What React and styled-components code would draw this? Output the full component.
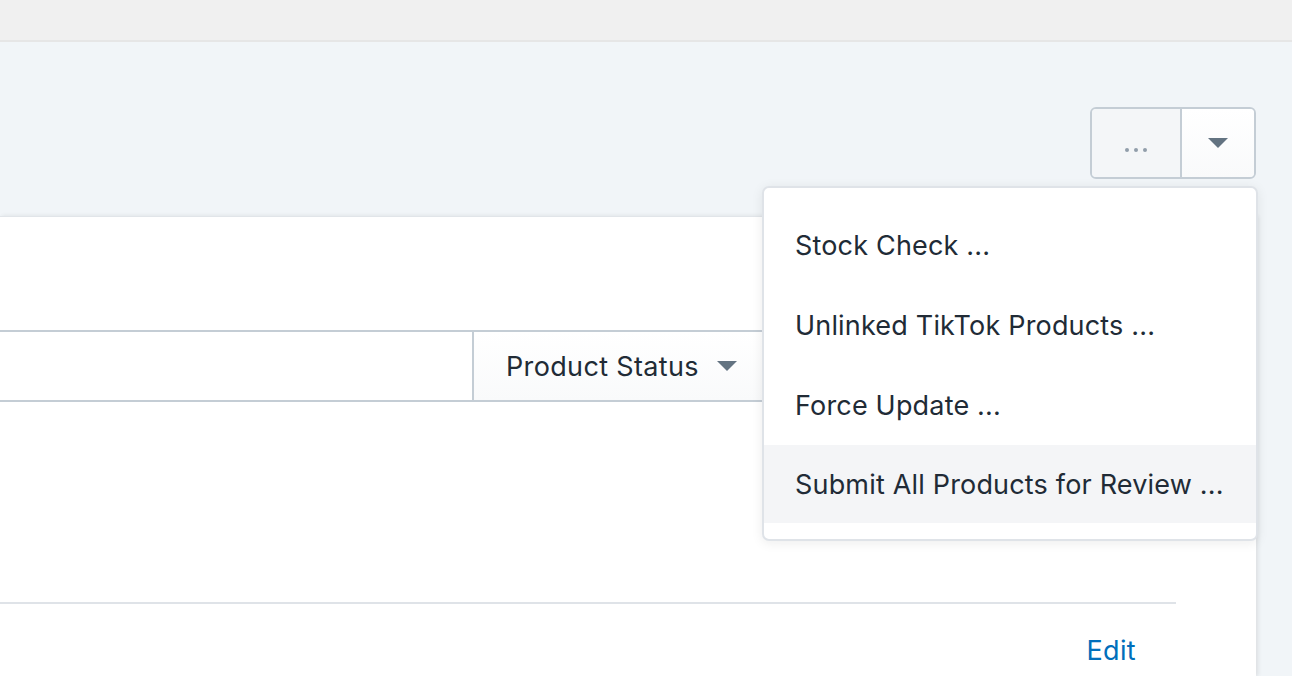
import styled, { createGlobalStyle } from 'styled-components'

const GlobalStyle = createGlobalStyle`
  html, body {
    margin: 0;
    padding: 0;
    background: #f1f5f8;
    font-family: Inter, "Noto Sans", sans-serif;
    overflow: hidden;
  }
`

const menuItems = [
  'Stock Check ...',
  'Unlinked TikTok Products ...',
  'Force Update ...',
  'Submit All Products for Review ...',
]

const App = () => {
  return (
    <Page>
      <GlobalStyle />
      <TopBar />
      <Header>
        <ActionsWrap>
          <ButtonGroup>
            <MoreButton>
              <Dots>
                <i /><i /><i />
              </Dots>
            </MoreButton>
            <CaretButton>
              <Caret $size={10} />
            </CaretButton>
          </ButtonGroup>
          <Menu>
            {menuItems.map((label, i) => (
              <MenuItem key={label} $active={i === menuItems.length - 1}>
                {label}
              </MenuItem>
            ))}
          </Menu>
        </ActionsWrap>
      </Header>
      <Card>
        <FilterRow>
          <SearchField />
          <FilterButton>
            Product Status
            <Caret $size={10} />
          </FilterButton>
        </FilterRow>
        <Divider />
        <EditRow>
          <EditLink>Edit</EditLink>
        </EditRow>
      </Card>
    </Page>
  )
}

export default App

const Page = styled.div`
  width: 1292px;
  height: 676px;
  background: #f1f5f8;
  overflow: hidden;
`

const TopBar = styled.div`
  height: 40px;
  background: #f0f0f0;
  border-bottom: 2px solid #e6e6e6;
`

const Header = styled.div`
  height: 174px;
  display: flex;
  justify-content: flex-end;
  padding-right: 36px;
  padding-top: 65px;
  box-sizing: border-box;
`

const ActionsWrap = styled.div`
  position: relative;
  height: 72px;
`

const ButtonGroup = styled.div`
  display: flex;
  height: 72px;
  border: 2px solid #c4cdd5;
  border-radius: 6px;
  box-sizing: border-box;
  overflow: hidden;
`

const MoreButton = styled.div`
  width: 88px;
  display: flex;
  align-items: center;
  justify-content: center;
  background: #f4f6f8;
  border-right: 2px solid #c4cdd5;
`

const Dots = styled.span`
  display: flex;
  gap: 5px;
  padding-top: 14px;
  i {
    width: 4px;
    height: 4px;
    border-radius: 50%;
    background: #919eab;
  }
`

const CaretButton = styled.div`
  width: 72px;
  display: flex;
  align-items: center;
  justify-content: center;
  background: linear-gradient(180deg, #ffffff, #f9fafb);
`

const Caret = styled.span`
  display: inline-block;
  width: 0;
  height: 0;
  border-left: ${(p) => p.$size}px solid transparent;
  border-right: ${(p) => p.$size}px solid transparent;
  border-top: ${(p) => p.$size}px solid #637381;
`

const Menu = styled.div`
  position: absolute;
  top: 79px;
  right: -2px;
  width: 496px;
  padding: 17px 0 16px;
  background: #fff;
  border: 2px solid #dfe3e8;
  border-radius: 7px;
  box-sizing: border-box;
  box-shadow: 0 2px 12px rgba(23, 24, 24, 0.08);
  z-index: 5;
`

const MenuItem = styled.div`
  height: ${(p) => (p.$active ? 78 : 80)}px;
  display: flex;
  align-items: center;
  padding-left: 31px;
  font-size: 27px;
  letter-spacing: 0.18px;
  color: #212b36;
  background: ${(p) => (p.$active ? '#f4f5f7' : 'transparent')};
`

const Card = styled.div`
  width: 1256px;
  height: 460px;
  background: #fff;
  border-top: 1px solid #e1e5e9;
  box-shadow: 2px 0 4px rgba(63, 63, 68, 0.12);
  padding: 113px 80px 0 0;
  box-sizing: border-box;
`

const FilterRow = styled.div`
  display: flex;
  height: 72px;
`

const SearchField = styled.div`
  flex: 0 0 474px;
  box-sizing: border-box;
  border: 2px solid #c4cdd5;
  border-left: none;
  background: #fff;
`

const FilterButton = styled.div`
  display: flex;
  align-items: center;
  gap: 18px;
  padding: 0 26px 0 32px;
  box-sizing: border-box;
  border: 2px solid #c4cdd5;
  margin-left: -2px;
  background: linear-gradient(180deg, #ffffff, #f9fafb);
  font-size: 27px;
  letter-spacing: 0.35px;
  color: #212b36;
  width: 340px;
`

const Divider = styled.div`
  margin-top: 200px;
  height: 2px;
  background: #dfe3e8;
`

const EditRow = styled.div`
  display: flex;
  justify-content: flex-end;
  padding: 30px 40px 0 0;
`

const EditLink = styled.span`
  font-size: 27px;
  letter-spacing: 0.35px;
  color: #006fbb;
`
